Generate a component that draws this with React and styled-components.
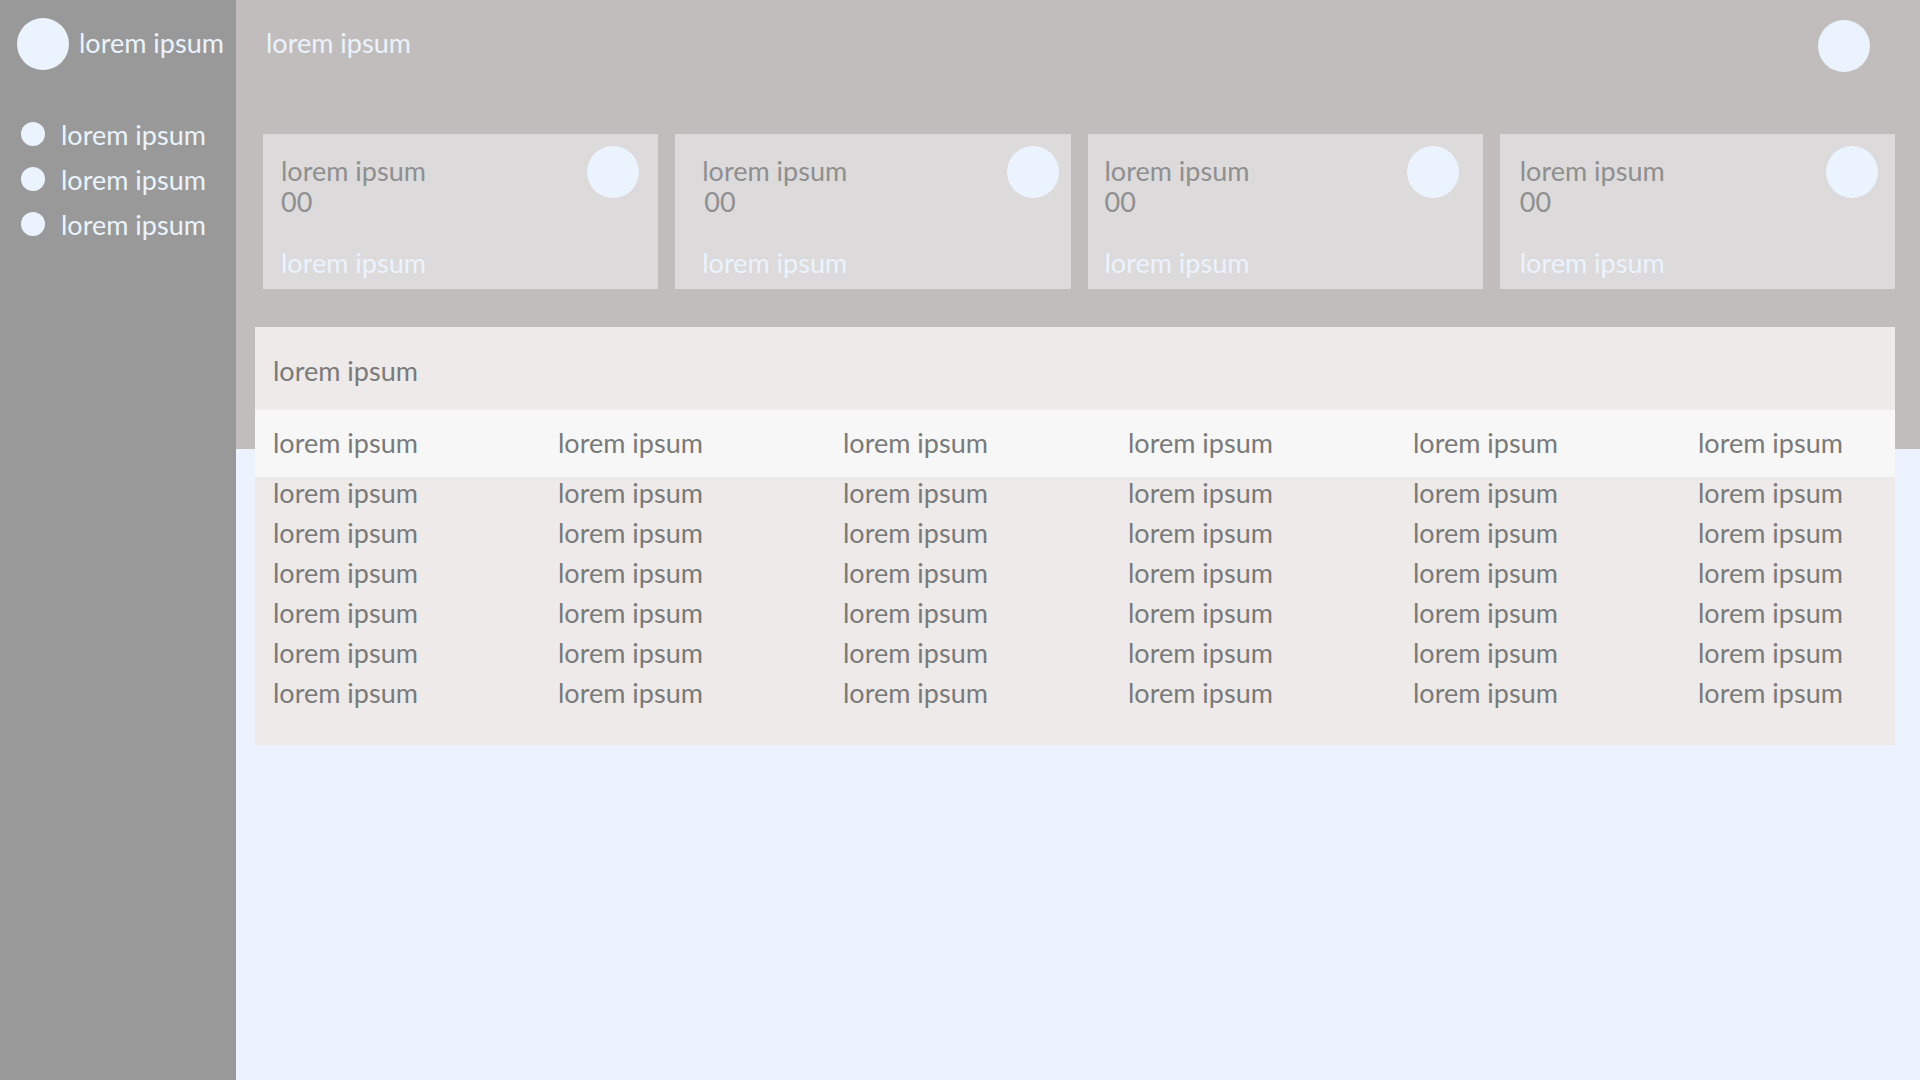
import React from 'react';
import styled, { createGlobalStyle } from 'styled-components';

const COLORS = {
  sidebar: '#999999',
  band: '#c1bdbc',
  page: '#ecf3fe',
  card: '#dcdadb',
  panel: '#edeae9',
  headRow: '#f7f7f7',
  light: '#ebf3fe',
  cardText: '#8f8f8f',
  tableText: '#7a7a7a',
};

const GlobalStyle = createGlobalStyle`
  html, body {
    margin: 0;
    padding: 0;
    height: 100%;
  }
  body {
    font-family: Lato, "Open Sans", "Liberation Sans", sans-serif;
    font-size: 27px;
  }
  #root {
    height: 100%;
  }
`;

const Layout = styled.div`
  display: flex;
  width: 1920px;
  height: 1080px;
  overflow: hidden;
`;

const Sidebar = styled.aside`
  width: 236px;
  flex-shrink: 0;
  background: ${COLORS.sidebar};
  color: ${COLORS.light};
  padding: 18px 0 0 17px;
  box-sizing: border-box;
`;

const Brand = styled.div`
  display: flex;
  align-items: flex-start;
  gap: 10px;
`;

const Dot = styled.span`
  display: block;
  flex-shrink: 0;
  width: ${(p) => p.size}px;
  height: ${(p) => p.size}px;
  border-radius: 50%;
  background: ${COLORS.light};
`;

const BrandName = styled.span`
  line-height: 32px;
  margin-top: 9px;
  white-space: nowrap;
`;

const Nav = styled.ul`
  list-style: none;
  margin: 41px 0 0 4px;
  padding: 0;
`;

const NavItem = styled.li`
  display: flex;
  align-items: center;
  gap: 16px;
  line-height: 45px;
  white-space: nowrap;
`;

const NavLabel = styled.span`
  position: relative;
  top: 1px;
`;

const Main = styled.main`
  flex: 1;
  background: linear-gradient(${COLORS.band} 0 449px, ${COLORS.page} 449px);
  padding: 20px 25px 0 0;
  box-sizing: border-box;
`;

const TopBar = styled.header`
  display: flex;
  justify-content: space-between;
  align-items: flex-start;
  padding: 0 25px 0 30px;
`;

const Title = styled.h1`
  margin: 7px 0 0;
  font-size: 27px;
  font-weight: 400;
  line-height: 32px;
  color: ${COLORS.light};
`;

const Cards = styled.section`
  display: grid;
  grid-template-columns: repeat(4, 1fr);
  gap: 17px;
  margin: 62px 0 0 27px;
`;

const Card = styled.div`
  display: flex;
  flex-direction: column;
  height: 155px;
  box-sizing: border-box;
  padding: 12px ${(p) => p.$dotInset}px 11px ${(p) => p.$textInset}px;
  background: ${COLORS.card};
`;

const CardTop = styled.div`
  display: flex;
  justify-content: space-between;
  align-items: flex-start;
`;

const CardText = styled.div`
  margin-top: 9px;
  line-height: 31px;
  color: ${COLORS.cardText};
`;

const CardValue = styled.div`
  padding-left: ${(p) => p.$indent || 0}px;
`;

const CardFoot = styled.div`
  margin-top: auto;
  line-height: 30px;
  color: ${COLORS.light};
`;

const Panel = styled.section`
  margin: 38px 0 0 19px;
  background: ${COLORS.panel};
  color: ${COLORS.tableText};
  padding-bottom: 36px;
`;

const PanelTitle = styled.div`
  line-height: 30px;
  padding: 29px 18px 24px;
`;

const Row = styled.div`
  display: grid;
  grid-template-columns: repeat(5, 285px) 1fr;
  padding: 0 18px;
  line-height: 32px;
  white-space: nowrap;
`;

const HeadRow = styled(Row)`
  background: ${COLORS.headRow};
  line-height: 30px;
  padding-top: 18px;
  padding-bottom: 19px;
`;

const Body = styled.div`
  display: flex;
  flex-direction: column;
  gap: 8px;
`;

const text = 'lorem ipsum';
const cols = Array.from({ length: 6 });
const rows = Array.from({ length: 6 });

const cards = [
  { textInset: 18, dotInset: 19, indent: 0 },
  { textInset: 27, dotInset: 12, indent: 2 },
  { textInset: 17, dotInset: 24, indent: 0 },
  { textInset: 20, dotInset: 17, indent: 0 },
];

export default function App() {
  return (
    <>
      <GlobalStyle />
      <Layout>
        <Sidebar>
          <Brand>
            <Dot size={52} />
            <BrandName>{text}</BrandName>
          </Brand>
          <Nav>
            {[0, 1, 2].map((i) => (
              <NavItem key={i}>
                <Dot size={24} />
                <NavLabel>{text}</NavLabel>
              </NavItem>
            ))}
          </Nav>
        </Sidebar>
        <Main>
          <TopBar>
            <Title>{text}</Title>
            <Dot size={52} />
          </TopBar>
          <Cards>
            {cards.map((card, i) => (
              <Card key={i} $textInset={card.textInset} $dotInset={card.dotInset}>
                <CardTop>
                  <CardText>
                    <div>{text}</div>
                    <CardValue $indent={card.indent}>00</CardValue>
                  </CardText>
                  <Dot size={52} />
                </CardTop>
                <CardFoot>{text}</CardFoot>
              </Card>
            ))}
          </Cards>
          <Panel>
            <PanelTitle>{text}</PanelTitle>
            <HeadRow>
              {cols.map((_, c) => (
                <span key={c}>{text}</span>
              ))}
            </HeadRow>
            <Body>
              {rows.map((_, r) => (
                <Row key={r}>
                  {cols.map((_, c) => (
                    <span key={c}>{text}</span>
                  ))}
                </Row>
              ))}
            </Body>
          </Panel>
        </Main>
      </Layout>
    </>
  );
}
